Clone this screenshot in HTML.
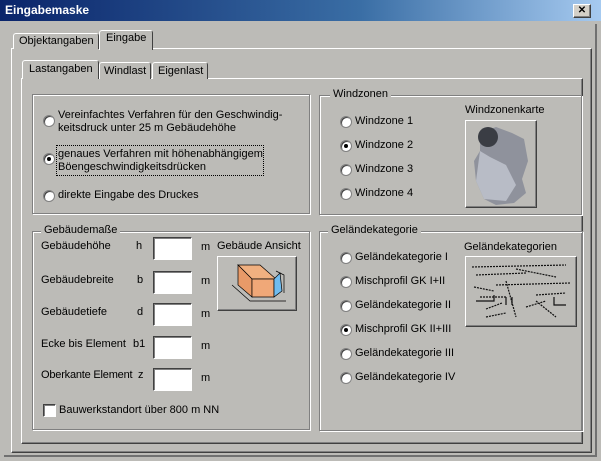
<!DOCTYPE html>
<html><head><meta charset="utf-8"><style>
*{margin:0;padding:0;box-sizing:border-box}
body{width:601px;height:461px;background:#bcbbb7;font-family:"Liberation Sans",sans-serif;font-size:11px;color:#000;position:relative;overflow:hidden}
.a{position:absolute;white-space:nowrap}
.raised{border:1px solid;border-color:#fff #404040 #404040 #fff;box-shadow:inset -1px -1px 0 #808080}
.grp{position:absolute;border:1px solid #808080;box-shadow:1px 1px 0 #fff, inset 1px 1px 0 #fff}
.gt{position:absolute;top:-8px;left:8px;background:#bcbbb7;padding:0 3px}
.rad{position:absolute;width:12px;height:12px;border-radius:50%;background:#fff;border:1px solid #808080;box-shadow:inset 1px 1px 0 #404040}
.rad.on::after{content:"";position:absolute;left:3px;top:3px;width:4px;height:4px;border-radius:50%;background:#000}
.inp{position:absolute;width:39px;height:23px;background:#fff;border:1px solid;border-color:#404040 #fff #fff #404040;box-shadow:inset 1px 1px 0 #808080}
.tab{position:absolute;border:1px solid;border-bottom:none;border-color:#fff #404040 #404040 #fff;border-radius:3px 3px 0 0;background:#bcbbb7;padding-left:5px}
</style></head><body>
<div class="a" style="left:0;top:0;width:601px;height:21px;background:linear-gradient(90deg,#0a246a,#3a6ea5 60%,#a6caf0);"></div>
<div class="a" style="left:5px;top:3px;color:#fff;font-weight:bold;font-size:12px">Eingabemaske</div>
<div class="a raised" style="left:573px;top:4px;width:18px;height:14px;background:#d4d0c8;font-size:10px;line-height:11px;text-align:center;font-weight:bold">✕</div>

<div class="a" style="left:11px;top:48px;width:581px;height:405px;border:1px solid;border-color:#fff #404040 #404040 #fff;box-shadow:inset -1px -1px 0 #808080"></div>
<div class="a" style="left:595px;top:24px;width:2px;height:432px;background:#707070"></div>
<div class="a" style="left:4px;top:455px;width:593px;height:2px;background:#707070"></div>
<div class="tab" style="left:13px;top:33px;width:86px;height:16px;line-height:15px">Objektangaben</div>
<div class="tab" style="left:99px;top:30px;width:54px;height:20px;line-height:15px;padding-left:6px">Eingabe</div>

<div class="a" style="left:21px;top:78px;width:562px;height:366px;border:1px solid;border-color:#fff #404040 #404040 #fff;box-shadow:inset -1px -1px 0 #808080"></div>
<div class="tab" style="left:22px;top:60px;width:77px;height:19px;line-height:17px;padding-left:6px">Lastangaben</div>
<div class="tab" style="left:99px;top:62px;width:52px;height:17px;line-height:16px;padding-left:4px">Windlast</div>
<div class="tab" style="left:152px;top:62px;width:56px;height:17px;line-height:16px;padding-left:5px">Eigenlast</div>

<div class="grp" style="left:32px;top:94px;width:278px;height:120px"></div>
<div class="rad" style="left:43px;top:115px"></div>
<div class="a" style="left:58px;top:109px;line-height:13px">Vereinfachtes Verfahren für den Geschwindig-<br>keitsdruck unter 25 m Gebäudehöhe</div>
<div class="rad on" style="left:43px;top:153px"></div>
<div class="a" style="left:56px;top:145px;width:208px;height:31px;border:1px dotted #000"></div>
<div class="a" style="left:58px;top:148px;line-height:13px">genaues Verfahren mit höhenabhängigem<br>Böengeschwindigkeitsdrücken</div>
<div class="rad" style="left:43px;top:190px"></div>
<div class="a" style="left:58px;top:189px">direkte Eingabe des Druckes</div>

<div class="grp" style="left:319px;top:95px;width:263px;height:120px"><div class="gt" style="left:10px">Windzonen</div></div>
<div class="rad" style="left:340px;top:116px"></div><div class="a" style="left:355px;top:115px">Windzone 1</div>
<div class="rad on" style="left:340px;top:140px"></div><div class="a" style="left:355px;top:139px">Windzone 2</div>
<div class="rad" style="left:340px;top:164px"></div><div class="a" style="left:355px;top:163px">Windzone 3</div>
<div class="rad" style="left:340px;top:188px"></div><div class="a" style="left:355px;top:187px">Windzone 4</div>
<div class="a" style="left:465px;top:104px">Windzonenkarte</div>
<div class="a raised" style="left:465px;top:120px;width:72px;height:88px">
<svg width="70" height="86"><path d="M14 12 L30 6 L46 12 L58 18 L62 40 L56 58 L60 72 L48 82 L30 84 L18 78 L10 60 L8 40 L14 30Z" fill="#8f929c"/><path d="M14 30 L10 60 L18 78 L40 80 L50 64 L40 44 L24 36Z" fill="#b8bcc6"/><circle cx="22" cy="16" r="10" fill="#3a3d44"/></svg></div>

<div class="grp" style="left:32px;top:231px;width:278px;height:199px"><div class="gt">Gebäudemaße</div></div>
<div class="a" style="left:41px;top:240px">Gebäudehöhe</div><div class="a" style="left:136px;top:240px">h</div><div class="inp" style="left:153px;top:237px"></div><div class="a" style="left:201px;top:241px">m</div>
<div class="a" style="left:41px;top:274px">Gebäudebreite</div><div class="a" style="left:137px;top:274px">b</div><div class="inp" style="left:153px;top:271px"></div><div class="a" style="left:201px;top:275px">m</div>
<div class="a" style="left:41px;top:306px">Gebäudetiefe</div><div class="a" style="left:137px;top:306px">d</div><div class="inp" style="left:153px;top:303px"></div><div class="a" style="left:201px;top:308px">m</div>
<div class="a" style="left:41px;top:338px">Ecke bis Element</div><div class="a" style="left:133px;top:338px">b1</div><div class="inp" style="left:153px;top:336px"></div><div class="a" style="left:201px;top:340px">m</div>
<div class="a" style="left:41px;top:369px;letter-spacing:-0.2px">Oberkante Element</div><div class="a" style="left:138px;top:369px">z</div><div class="inp" style="left:153px;top:368px"></div><div class="a" style="left:201px;top:372px">m</div>
<div class="a" style="left:217px;top:240px">Gebäude Ansicht</div>
<div class="a raised" style="left:217px;top:256px;width:80px;height:55px">
<svg width="78" height="53"><path d="M20 8 L42 8 L58 22 L34 22Z" fill="#f0b080" stroke="#000" stroke-width=".7"/><path d="M20 8 L34 22 L34 40 L20 28Z" fill="#e89a68" stroke="#000" stroke-width=".7"/><path d="M34 22 L56 22 L56 40 L34 40Z" fill="#f0a878" stroke="#000" stroke-width=".7"/><path d="M56 22 L62 16 L64 34 L56 40Z" fill="#70bcef" stroke="#000" stroke-width=".7"/><path d="M14 28 L32 44 L68 44 M58 14 L66 18 L66 36" stroke="#000" fill="none" stroke-width=".7"/></svg></div>
<div class="a" style="left:43px;top:404px;width:13px;height:13px;background:#fff;border:1px solid;border-color:#404040 #fff #fff #404040;box-shadow:inset 1px 1px 0 #808080"></div>
<div class="a" style="left:59px;top:404px">Bauwerkstandort über 800 m NN</div>

<div class="grp" style="left:319px;top:231px;width:264px;height:200px"><div class="gt">Geländekategorie</div></div>
<div class="rad" style="left:340px;top:252px"></div><div class="a" style="left:355px;top:251px">Geländekategorie I</div>
<div class="rad" style="left:340px;top:276px"></div><div class="a" style="left:355px;top:275px">Mischprofil GK I+II</div>
<div class="rad" style="left:340px;top:300px"></div><div class="a" style="left:355px;top:299px">Geländekategorie II</div>
<div class="rad on" style="left:340px;top:324px"></div><div class="a" style="left:355px;top:323px">Mischprofil GK II+III</div>
<div class="rad" style="left:340px;top:348px"></div><div class="a" style="left:355px;top:347px">Geländekategorie III</div>
<div class="rad" style="left:340px;top:372px"></div><div class="a" style="left:355px;top:371px">Geländekategorie IV</div>
<div class="a" style="left:464px;top:241px">Geländekategorien</div>
<div class="a raised" style="left:465px;top:256px;width:112px;height:71px">
<svg width="110" height="69" stroke="#111" fill="none" stroke-width="1.2"><path d="M6 10 L100 8 M10 18 L60 16 M30 28 L104 26 M14 40 L40 40 M70 38 L100 36 M20 52 L36 46 M60 50 L80 44 M40 24 L50 60 M8 30 L28 34 M50 12 L90 20 M70 44 L90 60 M20 60 L40 56" stroke-dasharray="2 1"/><path d="M10 44 L28 44 L28 38 M88 40 L88 48 L100 48 M40 48 L40 40 M46 48 L46 40"/></svg></div>
</body></html>
